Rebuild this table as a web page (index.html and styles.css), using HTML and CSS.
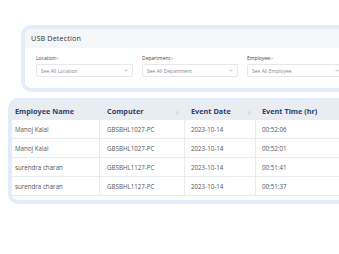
FILE: index.html
```html
<!DOCTYPE html>
<html>
<head>
<meta charset="utf-8">
<link rel="stylesheet" href="styles.css">
</head>
<body>
<div class="page">
  <section class="filter-card">
    <div class="filter-head">USB Detection</div>
    <div class="filter-body">
      <div class="field">
        <label class="field-label">Location:-</label>
        <div class="select"><span>See All Location</span><svg class="chev" viewBox="0 0 6 4"><path d="M0.8 0.8 L3 3 L5.2 0.8" fill="none" stroke="#777" stroke-width="0.8"/></svg></div>
      </div>
      <div class="field">
        <label class="field-label">Department:-</label>
        <div class="select"><span>See All Department</span><svg class="chev" viewBox="0 0 6 4"><path d="M0.8 0.8 L3 3 L5.2 0.8" fill="none" stroke="#777" stroke-width="0.8"/></svg></div>
      </div>
      <div class="field">
        <label class="field-label">Employee:-</label>
        <div class="select"><span>See All Employee</span><svg class="chev" viewBox="0 0 6 4"><path d="M0.8 0.8 L3 3 L5.2 0.8" fill="none" stroke="#777" stroke-width="0.8"/></svg></div>
      </div>
    </div>
  </section>

  <section class="table-card">
    <div class="table">
      <div class="row head">
        <div class="cell c1">Employee Name</div>
        <div class="cell c2">Computer<span class="sort">↓</span></div>
        <div class="cell c3">Event Date<span class="sort">↓</span></div>
        <div class="cell c4">Event Time (hr)</div>
      </div>
      <div class="row">
        <div class="cell c1">Manoj Kalal</div>
        <div class="cell c2">GBSBHL1027-PC</div>
        <div class="cell c3">2023-10-14</div>
        <div class="cell c4">00:52:06</div>
      </div>
      <div class="row">
        <div class="cell c1">Manoj Kalal</div>
        <div class="cell c2">GBSBHL1027-PC</div>
        <div class="cell c3">2023-10-14</div>
        <div class="cell c4">00:52:01</div>
      </div>
      <div class="row">
        <div class="cell c1">surendra charan</div>
        <div class="cell c2">GBSBHL1127-PC</div>
        <div class="cell c3">2023-10-14</div>
        <div class="cell c4">00:51:41</div>
      </div>
      <div class="row">
        <div class="cell c1">surendra charan</div>
        <div class="cell c2">GBSBHL1127-PC</div>
        <div class="cell c3">2023-10-14</div>
        <div class="cell c4">00:51:37</div>
      </div>
    </div>
  </section>
</div>
</body>
</html>
```
FILE: styles.css
```css
html, body {
  margin: 0;
  padding: 0;
  background: #ffffff;
  overflow: hidden;
}
body {
  width: 339px;
  height: 254px;
  font-family: "Open Sans", "Liberation Sans", sans-serif;
  color: #555;
}
.page {
  display: flex;
  flex-direction: column;
  padding-top: 25px;
  width: 339px;
  overflow: hidden;
}
.filter-card {
  margin-left: 21px;
  width: 340px;
  flex-shrink: 0;
  border: 4px solid #e3edfa;
  border-radius: 10px;
  background: #fff;
  overflow: hidden;
}
.filter-head {
  height: 19px;
  background: #f5f6f8;
  padding-left: 6px;
  font-size: 7.2px;
  line-height: 19px;
  color: #333;
  letter-spacing: 0.15px;
}
.filter-body {
  display: grid;
  grid-template-columns: 97px 96px 97px;
  column-gap: 9px;
  padding: 7px 11px 11px;
  background: #fff;
}
.field {
  display: flex;
  flex-direction: column;
  gap: 2px;
}
.field-label {
  font-size: 5px;
  line-height: 7px;
  color: #444;
}
.select {
  height: 13px;
  box-sizing: border-box;
  border: 1px solid #e6e8eb;
  border-radius: 2px;
  display: flex;
  align-items: center;
  justify-content: space-between;
  padding: 0 4px 0 4px;
  font-size: 5px;
  color: #888;
}
.chev {
  width: 4px;
  height: 3px;
}
.table-card {
  margin-top: 6px;
  margin-left: 8px;
  width: 345px;
  flex-shrink: 0;
  border: 4px solid #e3edfa;
  border-radius: 10px;
  background: #fff;
  overflow: hidden;
}
.table {
  display: flex;
  flex-direction: column;
}
.row {
  display: grid;
  grid-template-columns: 88px 85px 71px 1fr;
  height: 19px;
  border-bottom: 1px solid #e9ebee;
  box-sizing: border-box;
}
.row:last-child {
  margin-bottom: 4px;
}
.row.head {
  height: 18px;
  background: #e9edf2;
  border-bottom: none;
}
.cell {
  display: flex;
  align-items: center;
  font-size: 6.2px;
  color: #555;
  border-right: 1px solid #e9ebee;
  white-space: nowrap;
}
.row.head .cell {
  border-right: none;
  font-weight: 700;
  font-size: 7.3px;
  color: #2e3f6c;
}
.c1 { padding-left: 3px; }
.c2 { padding-left: 7px; justify-content: space-between; padding-right: 6px; }
.c3 { padding-left: 6px; justify-content: space-between; padding-right: 5px; }
.c4 { padding-left: 6px; border-right: none; }
.row.head .sort {
  font-weight: 400;
  color: #a3aab5;
  font-size: 7px;
}
```
